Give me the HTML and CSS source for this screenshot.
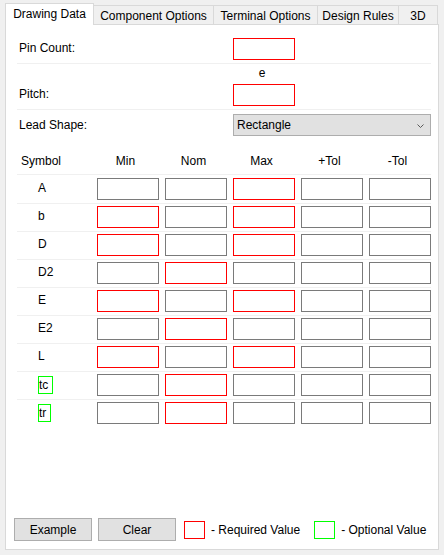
FILE: index.html
```html
<!DOCTYPE html>
<html>
<head>
<meta charset="utf-8">
<link rel="stylesheet" href="styles.css">
</head>
<body>
<div class="tabs">
  <div class="tab tab-active">Drawing Data</div>
  <div class="tab tab-comp">Component Options</div>
  <div class="tab tab-term">Terminal Options</div>
  <div class="tab tab-rules">Design Rules</div>
  <div class="tab tab-3d">3D</div>
</div>
<div class="panel">
  <div class="form">
    <div class="row row-pin">
      <span class="lbl">Pin Count:</span>
      <div class="box req field-box"></div>
    </div>
    <div class="row row-pitch">
      <span class="lbl lbl-pitch">Pitch:</span>
      <div class="field">
        <span class="field-cap">e</span>
        <div class="box req field-box"></div>
      </div>
    </div>
    <div class="row row-lead">
      <span class="lbl lbl-lead">Lead Shape:</span>
      <div class="select">
        <span class="select-text">Rectangle</span>
        <svg class="chev" width="7" height="4" viewBox="0 0 7 4"><polyline points="0.5,0.5 3.5,3.5 6.5,0.5" fill="none" stroke="#5a5a5a" stroke-width="1"/></svg>
      </div>
    </div>

    <div class="trow thead">
      <span class="hsym">Symbol</span>
      <span class="hc">Min</span>
      <span class="hc">Nom</span>
      <span class="hc">Max</span>
      <span class="hc">+Tol</span>
      <span class="hc">-Tol</span>
    </div>
    <div class="trow drow drow-first">
      <span class="sym">A</span>
      <div class="box"></div><div class="box"></div><div class="box req"></div><div class="box"></div><div class="box"></div>
    </div>
    <div class="trow drow">
      <span class="sym">b</span>
      <div class="box req"></div><div class="box"></div><div class="box req"></div><div class="box"></div><div class="box"></div>
    </div>
    <div class="trow drow">
      <span class="sym">D</span>
      <div class="box req"></div><div class="box"></div><div class="box req"></div><div class="box"></div><div class="box"></div>
    </div>
    <div class="trow drow">
      <span class="sym">D2</span>
      <div class="box"></div><div class="box req"></div><div class="box"></div><div class="box"></div><div class="box"></div>
    </div>
    <div class="trow drow">
      <span class="sym">E</span>
      <div class="box req"></div><div class="box"></div><div class="box req"></div><div class="box"></div><div class="box"></div>
    </div>
    <div class="trow drow">
      <span class="sym">E2</span>
      <div class="box"></div><div class="box req"></div><div class="box"></div><div class="box"></div><div class="box"></div>
    </div>
    <div class="trow drow">
      <span class="sym">L</span>
      <div class="box req"></div><div class="box"></div><div class="box req"></div><div class="box"></div><div class="box"></div>
    </div>
    <div class="trow drow">
      <span class="sym sym-opt"><span class="opt-tag">tc</span></span>
      <div class="box"></div><div class="box req"></div><div class="box"></div><div class="box"></div><div class="box"></div>
    </div>
    <div class="trow drow drow-last">
      <span class="sym sym-opt"><span class="opt-tag">tr</span></span>
      <div class="box"></div><div class="box req"></div><div class="box"></div><div class="box"></div><div class="box"></div>
    </div>
  </div>

  <div class="footer">
    <div class="btn">Example</div>
    <div class="btn btn-2">Clear</div>
    <div class="legend-box legend-req"></div>
    <span class="legend-text">- Required Value</span>
    <div class="legend-box legend-opt"></div>
    <span class="legend-text">- Optional Value</span>
  </div>
</div>
</body>
</html>
```

FILE: styles.css
```css
* { box-sizing: border-box; }
html, body { margin: 0; padding: 0; }
body {
  background: #f0f0f0;
  font-family: "Liberation Sans", Arial, sans-serif;
  font-size: 12px;
  color: #000;
  width: 444px;
  height: 555px;
  overflow: hidden;
}

/* Tabs */
.tabs {
  display: flex;
  align-items: flex-end;
  padding: 3px 0 0 5px;
}
.tab {
  height: 19px;
  padding-top: 3px;
  line-height: 14px;
  text-align: center;
  white-space: nowrap;
  background: #f0f0f0;
  border-top: 1px solid #d9d9d9;
  border-right: 1px solid #d9d9d9;
}
.tab-active {
  width: 89px;
  height: 22px;
  margin-bottom: -1px;
  position: relative;
  z-index: 1;
  background: #fff;
  border-left: 1px solid #d9d9d9;
}
.tab-comp { width: 120px; }
.tab-term { width: 104px; }
.tab-rules { width: 81px; }
.tab-3d { width: 39px; }

/* Panel */
.panel {
  width: 434px;
  height: 526px;
  margin-left: 5px;
  background: #fff;
  border: 1px solid #d9d9d9;
  display: flex;
  flex-direction: column;
  padding: 0 0 8px 8px;
}
.form {
  margin-left: 3px;
  width: 414px;
}
.row {
  display: flex;
  align-items: flex-start;
  border-bottom: 1px solid #f0f0f0;
}
.lbl {
  width: 216px;
  padding-left: 2px;
  line-height: 20px;
}
.row-pin { padding: 13px 0 3px; }
.row-pitch { padding: 2px 0 3px; align-items: flex-end; }
.lbl-pitch { margin-bottom: 2px; }
.field {
  display: flex;
  flex-direction: column;
  align-items: center;
  width: 62px;
  gap: 4px;
}
.field-cap { line-height: 14px; padding-right: 4px; }
.field-box { width: 62px; }
.row-lead { padding-top: 4px; border-bottom: none; }
.lbl-lead { padding-top: 1px; }

.select {
  width: 198px;
  height: 22px;
  background: #e1e1e1;
  border: 1px solid #adadad;
  display: flex;
  align-items: flex-start;
}
.select-text {
  flex: 1;
  padding: 1px 0 0 3px;
  line-height: 19px;
}
.chev {
  margin: 9px 6px 0 0;
  display: block;
}

/* Table */
.trow {
  display: grid;
  grid-template-columns: 74px repeat(5, 62px);
  column-gap: 6px;
}
.thead {
  padding: 18px 0 6px;
  line-height: 14px;
  border-bottom: 1px solid #f0f0f0;
}
.hsym { padding-left: 4px; }
.hc { text-align: center; padding-right: 5px; }
.drow {
  padding: 2px 0 3px;
  border-bottom: 1px solid #f0f0f0;
}
.drow-first { padding-top: 3px; }
.drow-last { border-bottom: none; }
.sym {
  padding-left: 21px;
  line-height: 20px;
}
.sym-opt { line-height: normal; }
.opt-tag {
  display: inline-block;
  height: 18px;
  line-height: 16px;
  margin-top: 2px;
  padding-right: 4px;
  border: 1px solid #00ff00;
}
.box {
  height: 22px;
  background: #fff;
  border: 1px solid #7a7a7a;
}
.box.req { border-color: #ff0000; }

/* Footer */
.footer {
  margin-top: auto;
  display: flex;
  align-items: center;
}
.btn {
  width: 78px;
  height: 23px;
  padding-top: 1px;
  line-height: 20px;
  text-align: center;
  background: #e1e1e1;
  border: 1px solid #adadad;
}
.btn-2 { margin-left: 6px; }
.legend-box {
  width: 21px;
  height: 18px;
  margin-left: 8px;
}
.legend-req { border: 1px solid #ff0000; }
.legend-opt { border: 1px solid #00ff00; margin-left: 14px; }
.legend-text {
  margin-left: 6px;
  line-height: 14px;
  white-space: nowrap;
}
```
